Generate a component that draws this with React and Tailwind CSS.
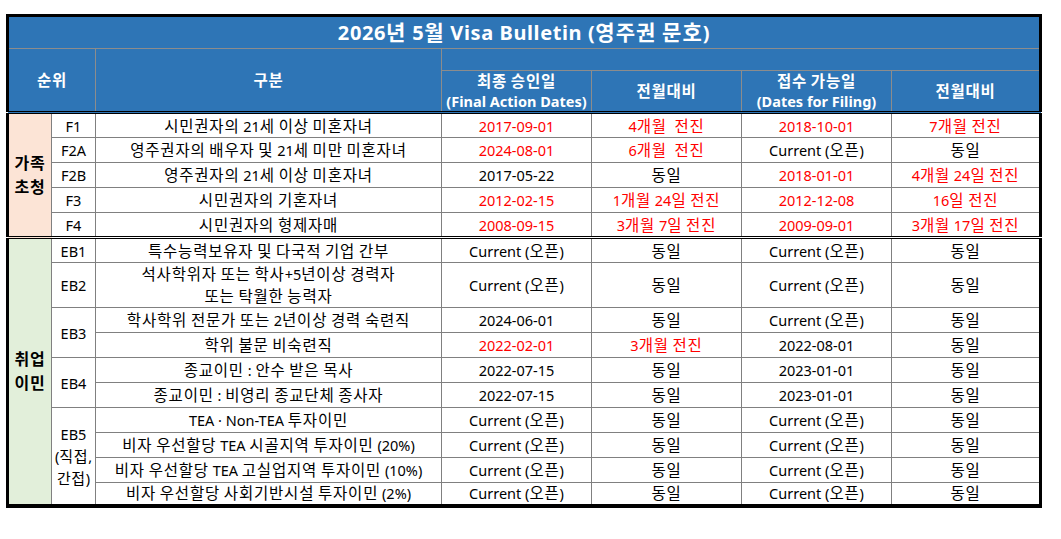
const RED = 'text-[#ff0000]'
const CELL = 'border border-[#808080] p-0 text-center align-middle whitespace-pre'
const DBL = 'border-b-[3px] border-b-black [border-bottom-style:double]'
const HEAD = 'border border-[#8c8c8c] p-0 text-center align-middle font-bold text-white leading-[20px]'

const OPEN = 'Current (오픈)'
const SAME = '동일'

// hangul runs are set a bit larger and looser, the way the sheet's font draws them
const ko = (t, cls = 'text-[15.5px] tracking-[0.8px]') =>
  t.split(/([\uAC00-\uD7A3]+)/).map((s, i) =>
    i % 2 ? (
      <span key={i} className={cls + ' leading-none'}>
        {s}
      </span>
    ) : (
      s
    )
  )

// each cell: [text, isRed]
const body = [
  {
    group: '가족\n초청', groupSpan: 5, groupBg: 'bg-[#fce4d6]',
    code: 'F1', codeSpan: 1,
    desc: '시민권자의 21세 이상 미혼자녀',
    cells: [['2017-09-01', 1], ['4개월  전진', 1], ['2018-10-01', 1], ['7개월 전진', 1]],
  },
  {
    code: 'F2A', codeSpan: 1,
    desc: '영주권자의 배우자 및 21세 미만 미혼자녀',
    cells: [['2024-08-01', 1], ['6개월  전진', 1], [OPEN], [SAME]],
  },
  {
    code: 'F2B', codeSpan: 1,
    desc: '영주권자의 21세 이상 미혼자녀',
    cells: [['2017-05-22'], [SAME], ['2018-01-01', 1], ['4개월 24일 전진', 1]],
  },
  {
    code: 'F3', codeSpan: 1,
    desc: '시민권자의 기혼자녀',
    cells: [['2012-02-15', 1], ['1개월 24일 전진', 1], ['2012-12-08', 1], ['16일 전진', 1]],
  },
  {
    code: 'F4', codeSpan: 1, dbl: true,
    desc: '시민권자의 형제자매',
    cells: [['2008-09-15', 1], ['3개월 7일 전진', 1], ['2009-09-01', 1], ['3개월 17일 전진', 1]],
  },
  {
    group: '취업\n이민', groupSpan: 10, groupBg: 'bg-[#e2efda]',
    code: 'EB1', codeSpan: 1,
    desc: '특수능력보유자 및 다국적 기업 간부',
    cells: [[OPEN], [SAME], [OPEN], [SAME]],
  },
  {
    code: 'EB2', codeSpan: 1, tall: true,
    desc: '석사학위자 또는 학사+5년이상 경력자\n또는 탁월한 능력자',
    cells: [[OPEN], [SAME], [OPEN], [SAME]],
  },
  {
    code: 'EB3', codeSpan: 2,
    desc: '학사학위 전문가 또는 2년이상 경력 숙련직',
    cells: [['2024-06-01'], [SAME], [OPEN], [SAME]],
  },
  {
    desc: '학위 불문 비숙련직',
    cells: [['2022-02-01', 1], ['3개월 전진', 1], ['2022-08-01'], [SAME]],
  },
  {
    code: 'EB4', codeSpan: 2,
    desc: '종교이민 : 안수 받은 목사',
    cells: [['2022-07-15'], [SAME], ['2023-01-01'], [SAME]],
  },
  {
    desc: '종교이민 : 비영리 종교단체 종사자',
    cells: [['2022-07-15'], [SAME], ['2023-01-01'], [SAME]],
  },
  {
    code: 'EB5\n(직접,\n간접)', codeSpan: 4,
    desc: 'TEA · Non-TEA 투자이민',
    cells: [[OPEN], [SAME], [OPEN], [SAME]],
  },
  {
    desc: '비자 우선할당 TEA 시골지역 투자이민 (20%)',
    cells: [[OPEN], [SAME], [OPEN], [SAME]],
  },
  {
    desc: '비자 우선할당 TEA 고실업지역 투자이민 (10%)',
    cells: [[OPEN], [SAME], [OPEN], [SAME]],
  },
  {
    desc: '비자 우선할당 사회기반시설 투자이민 (2%)',
    cells: [[OPEN], [SAME], [OPEN], [SAME]],
    last: true,
  },
]

export default function App() {
  return (
    <div className="min-h-[539px] w-[1061px] bg-white pl-[6px] pt-[14px] font-['Noto_Sans','Noto_Sans_CJK_KR',sans-serif] text-[14.5px] leading-[20px] text-black">
      <table className="table-fixed border-collapse border-[3px] border-b-4 border-black">
        <colgroup>
          <col className="w-[44px]" />
          <col className="w-[44px]" />
          <col className="w-[346px]" />
          <col className="w-[150px]" />
          <col className="w-[150px]" />
          <col className="w-[150px]" />
          <col className="w-[149px]" />
        </colgroup>
        <thead className="bg-[#2e75b6]">
          <tr className="h-[33px]">
            <th colSpan={7} className={HEAD + ' text-[20px] tracking-[0.6px]'}>
              {ko('2026년 5월 Visa Bulletin (영주권 문호)', 'text-[21px] tracking-[1px]')}
            </th>
          </tr>
          <tr className="h-[22px]">
            <th colSpan={2} rowSpan={2} className={HEAD + ' ' + DBL}>{ko('순위')}</th>
            <th rowSpan={2} className={HEAD + ' ' + DBL}>{ko('구분')}</th>
            <th colSpan={4} className={HEAD}></th>
          </tr>
          <tr className="h-[41px]">
            <th className={HEAD + ' ' + DBL}>
              {ko('최종 승인일')}
              <br />
              (Final Action Dates)
            </th>
            <th className={HEAD + ' ' + DBL}>{ko('전월대비')}</th>
            <th className={HEAD + ' ' + DBL}>
              {ko('접수 가능일')}
              <br />
              (Dates for Filing)
            </th>
            <th className={HEAD + ' ' + DBL}>{ko('전월대비')}</th>
          </tr>
        </thead>
        <tbody>
          {body.map((r, i) => {
            const rowDbl = r.dbl ? ' ' + DBL : ''
            return (
              <tr key={i} className={r.tall ? 'h-[44px]' : r.last ? 'h-[23px]' : 'h-[25px]'}>
                {r.group && (
                  <td
                    rowSpan={r.groupSpan}
                    className={CELL + ' font-bold leading-[24px] ' + r.groupBg + (r.groupSpan === 5 ? ' ' + DBL : '')}
                  >
                    {ko(r.group, 'text-[16px] tracking-[0.8px]')}
                  </td>
                )}
                {r.code && (
                  <td
                    rowSpan={r.codeSpan}
                    className={CELL + (r.codeSpan === 4 ? ' leading-[22px]' : '') + (r.codeSpan === 1 ? rowDbl : '')}
                  >
                    {ko(r.code, r.codeSpan === 4 ? 'text-[15px] tracking-[0.6px]' : undefined)}
                  </td>
                )}
                <td className={CELL + (r.tall ? ' leading-[22px]' : '') + rowDbl}>{ko(r.desc)}</td>
                {r.cells.map(([t, red], j) => (
                  <td key={j} className={CELL + rowDbl + (red ? ' ' + RED : '')}>
                    {ko(t)}
                  </td>
                ))}
              </tr>
            )
          })}
        </tbody>
      </table>
    </div>
  )
}
